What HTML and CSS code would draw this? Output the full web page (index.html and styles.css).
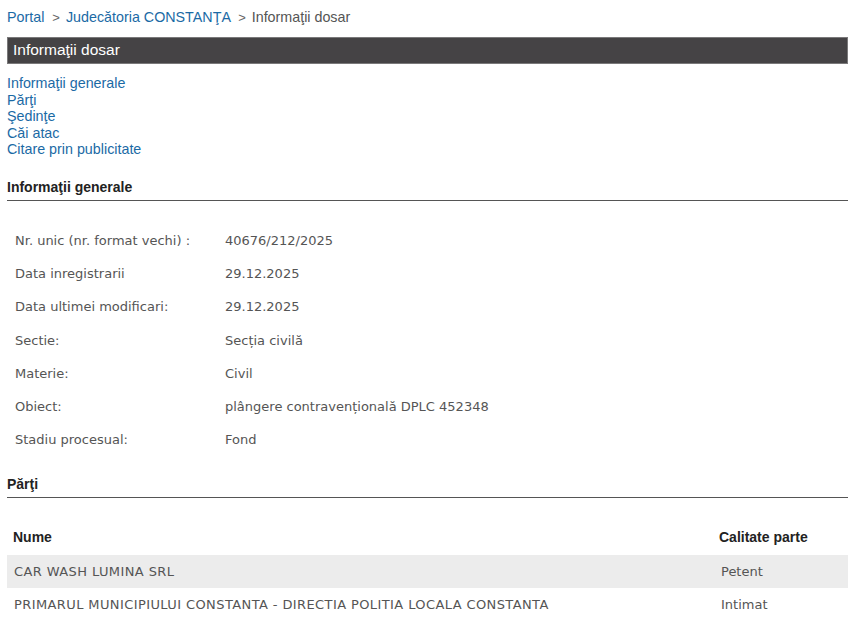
FILE: index.html
```html
<!DOCTYPE html>
<html lang="ro">
<head>
<meta charset="utf-8">
<title>Informaţii dosar</title>
<link rel="stylesheet" href="styles.css">
</head>
<body>
<div class="page">
  <div class="crumbs">
    <a href="#">Portal</a>
    <span class="sep">&gt;</span>
    <a href="#">Judecătoria CONSTANŢA</a>
    <span class="sep">&gt;</span>
    <span class="current">Informaţii dosar</span>
  </div>
  <div class="titlebar">Informaţii dosar</div>
  <nav class="toc">
    <a href="#">Informaţii generale</a>
    <a href="#">Părţi</a>
    <a href="#">Şedinţe</a>
    <a href="#">Căi atac</a>
    <a href="#">Citare prin publicitate</a>
  </nav>
  <h2 class="section">Informaţii generale</h2>
  <div class="info">
    <div class="row"><span class="label">Nr. unic (nr. format vechi) :</span><span class="value">40676/212/2025</span></div>
    <div class="row"><span class="label">Data inregistrarii</span><span class="value">29.12.2025</span></div>
    <div class="row"><span class="label">Data ultimei modificari:</span><span class="value">29.12.2025</span></div>
    <div class="row"><span class="label">Sectie:</span><span class="value">Secția civilă</span></div>
    <div class="row"><span class="label">Materie:</span><span class="value">Civil</span></div>
    <div class="row"><span class="label">Obiect:</span><span class="value">plângere contravențională DPLC 452348</span></div>
    <div class="row"><span class="label">Stadiu procesual:</span><span class="value">Fond</span></div>
  </div>
  <h2 class="section">Părţi</h2>
  <table class="parti">
    <thead>
      <tr><th>Nume</th><th class="col2">Calitate parte</th></tr>
    </thead>
    <tbody>
      <tr class="alt"><td>CAR WASH LUMINA SRL</td><td class="col2">Petent</td></tr>
      <tr><td>PRIMARUL MUNICIPIULUI CONSTANTA - DIRECTIA POLITIA LOCALA CONSTANTA</td><td class="col2">Intimat</td></tr>
    </tbody>
  </table>
</div>
</body>
</html>
```
FILE: styles.css
```css
html, body {
  margin: 0;
  padding: 0;
  background: #fff;
}
.page {
  padding: 0 7px;
  font-family: "Liberation Sans", Arial, sans-serif;
}
a {
  color: #1b6aa5;
  text-decoration: none;
}
.crumbs {
  font-size: 14.3px;
  line-height: 16px;
  padding-top: 9px;
  height: 28px;
  box-sizing: border-box;
  color: #555;
}
.crumbs .sep {
  color: #666;
  font-size: 13px;
  margin: 0 2px 0 4px;
}
.titlebar {
  margin-top: 9px;
  height: 27px;
  box-sizing: border-box;
  background: #454345;
  border: 1px solid #7a797a;
  color: #fff;
  font-size: 15.5px;
  line-height: 24px;
  padding-left: 5px;
}
.toc {
  display: flex;
  flex-direction: column;
  margin-top: 11px;
  font-size: 14.3px;
  line-height: 16.6px;
}
.section {
  margin: 21px 0 0;
  font-size: 14px;
  font-weight: bold;
  color: #222;
  line-height: 16px;
  padding-bottom: 5px;
  border-bottom: 1px solid #555;
}
.info {
  padding-top: 23px;
  padding-bottom: 8px;
  font-family: "DejaVu Sans", Verdana, sans-serif;
  font-size: 13px;
  color: #555;
}
.row {
  display: flex;
  height: 33.2px;
  align-items: center;
  padding-left: 8px;
}
.label {
  width: 210px;
  flex: none;
}
.info + .section {
  margin-top: 12px;
}
.parti {
  width: 100%;
  border-collapse: collapse;
  margin-top: 20px;
  font-family: "DejaVu Sans", Verdana, sans-serif;
  font-size: 13px;
  letter-spacing: 0.4px;
  color: #555;
}
.parti th {
  text-align: left;
  font-family: "Liberation Sans", Arial, sans-serif;
  font-size: 14px;
  letter-spacing: 0;
  font-weight: bold;
  color: #222;
  height: 37px;
  padding: 0 6px;
}
.parti td {
  height: 33px;
  padding: 0 6px 0 8px;
}
.parti td:first-child {
  padding-left: 7px;
}
.parti .col2 {
  width: 121px;
  letter-spacing: 0;
}
.parti tr.alt td {
  background: #ececec;
}
```
